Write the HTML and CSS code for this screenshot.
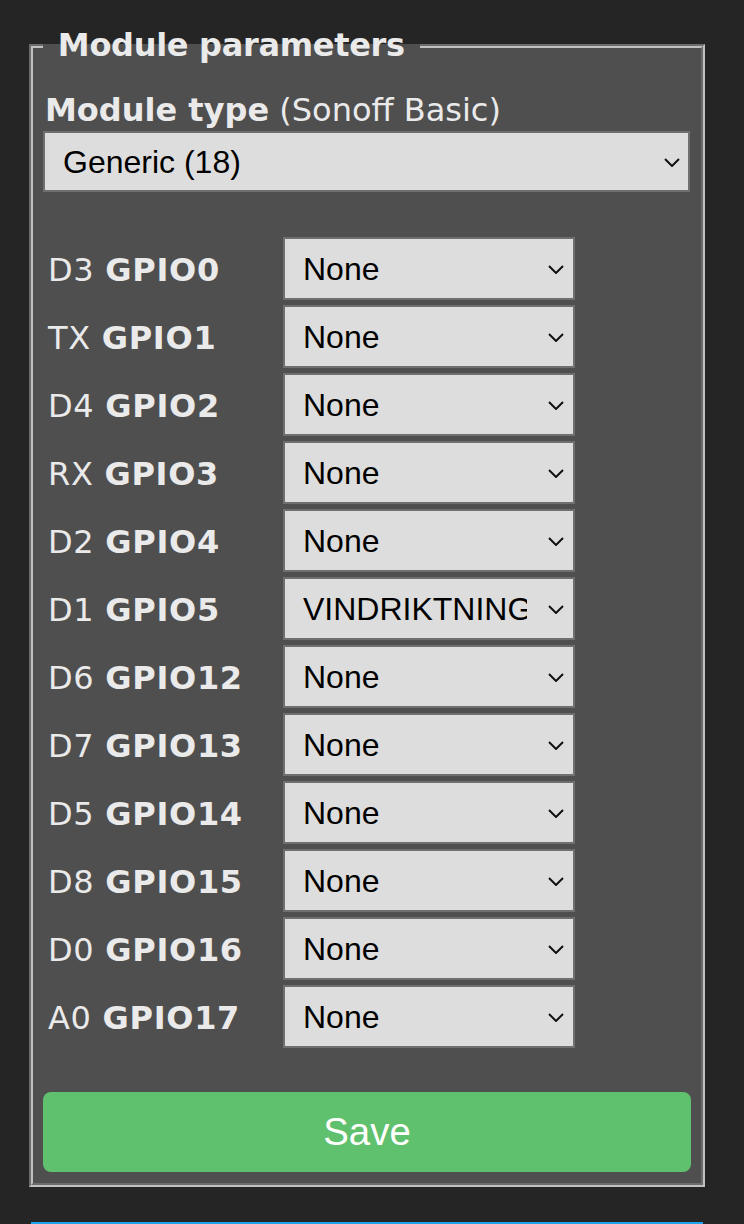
FILE: index.html
```
<!DOCTYPE HTML>
<html lang="en">

<head>
  <meta charset="utf-8" />
  <meta name="viewport" content="width=device-width,initial-scale=1.0,user-scalable=no" />
  <title>Configure Module</title>
  <link rel="stylesheet" href="styles.css">
</head>

<body>
  <div id="main">
    <fieldset id="module">
      <legend><b>&nbsp;Module parameters&nbsp;</b></legend>
      <form>
        <div class="type"><b>Module type</b> (Sonoff Basic)</div>
        <span class="pick sel-wide">
          <select><option>Generic (18)</option></select>
          <svg class="chev" viewBox="0 0 16 9"><path d="M1 1 L8 8 L15 1" /></svg>
        </span>

        <div id="gpios">
          <label>D3 <b>GPIO0</b></label>
          <span class="pick">
            <select><option>None</option></select>
            <svg class="chev" viewBox="0 0 16 9"><path d="M1 1 L8 8 L15 1" /></svg>
          </span>
          <label>TX <b>GPIO1</b></label>
          <span class="pick">
            <select><option>None</option></select>
            <svg class="chev" viewBox="0 0 16 9"><path d="M1 1 L8 8 L15 1" /></svg>
          </span>
          <label>D4 <b>GPIO2</b></label>
          <span class="pick">
            <select><option>None</option></select>
            <svg class="chev" viewBox="0 0 16 9"><path d="M1 1 L8 8 L15 1" /></svg>
          </span>
          <label>RX <b>GPIO3</b></label>
          <span class="pick">
            <select><option>None</option></select>
            <svg class="chev" viewBox="0 0 16 9"><path d="M1 1 L8 8 L15 1" /></svg>
          </span>
          <label>D2 <b>GPIO4</b></label>
          <span class="pick">
            <select><option>None</option></select>
            <svg class="chev" viewBox="0 0 16 9"><path d="M1 1 L8 8 L15 1" /></svg>
          </span>
          <label>D1 <b>GPIO5</b></label>
          <span class="pick">
            <select><option>VINDRIKTNING</option></select>
            <svg class="chev" viewBox="0 0 16 9"><path d="M1 1 L8 8 L15 1" /></svg>
          </span>
          <label>D6 <b>GPIO12</b></label>
          <span class="pick">
            <select><option>None</option></select>
            <svg class="chev" viewBox="0 0 16 9"><path d="M1 1 L8 8 L15 1" /></svg>
          </span>
          <label>D7 <b>GPIO13</b></label>
          <span class="pick">
            <select><option>None</option></select>
            <svg class="chev" viewBox="0 0 16 9"><path d="M1 1 L8 8 L15 1" /></svg>
          </span>
          <label>D5 <b>GPIO14</b></label>
          <span class="pick">
            <select><option>None</option></select>
            <svg class="chev" viewBox="0 0 16 9"><path d="M1 1 L8 8 L15 1" /></svg>
          </span>
          <label>D8 <b>GPIO15</b></label>
          <span class="pick">
            <select><option>None</option></select>
            <svg class="chev" viewBox="0 0 16 9"><path d="M1 1 L8 8 L15 1" /></svg>
          </span>
          <label>D0 <b>GPIO16</b></label>
          <span class="pick">
            <select><option>None</option></select>
            <svg class="chev" viewBox="0 0 16 9"><path d="M1 1 L8 8 L15 1" /></svg>
          </span>
          <label>A0 <b>GPIO17</b></label>
          <span class="pick">
            <select><option>None</option></select>
            <svg class="chev" viewBox="0 0 16 9"><path d="M1 1 L8 8 L15 1" /></svg>
          </span>
        </div>

        <button type="button" class="button bgrn">Save</button>
      </form>
    </fieldset>

    <div class="next-btn"></div>
  </div>
</body>

</html>
```

FILE: styles.css
```
html,
body {
  height: 1224px;
  overflow: hidden;
}

body {
  margin: 0px;
  background: #252525;
  color: #eaeaea;
  font-family: "DejaVu Sans", Verdana, sans-serif;
  font-size: 32px;
}

#main {
  width: 676px;
  margin-left: 29px;
}

#module {
  margin: 27px 0 0 0;
  padding: 0 10px 11px 10px;
  min-width: 0;
  box-sizing: border-box;
  width: 676px;
  border: 4px groove #c0c0c0;
  background: #4f4f4f;
}

#module legend {
  padding: 0 4px;
  font-size: 32px;
  line-height: 37px;
  letter-spacing: -0.3px;
}

.type {
  margin-top: 28px;
  padding-left: 2px;
  line-height: 37px;
}

.pick {
  position: relative;
  display: block;
  width: 292px;
}

.pick select {
  display: block;
  width: 100%;
  box-sizing: border-box;
  height: 63px;
  margin: 0;
  padding: 0 46px 0 18px;
  border: 2px solid #6f6f6f;
  border-radius: 0;
  background: #dddddd;
  color: #000;
  font-family: "Liberation Sans", Arial, sans-serif;
  font-size: 32px;
  -webkit-appearance: none;
  appearance: none;
}

.chev {
  position: absolute;
  right: 11px;
  top: 50%;
  width: 16px;
  height: 9px;
  margin-top: -4px;
  pointer-events: none;
}

.chev path {
  fill: none;
  stroke: #111;
  stroke-width: 2;
}

.sel-wide {
  width: 647px;
  margin-top: 2px;
}

.sel-wide select {
  height: 61px;
  padding-left: 18px;
}

.sel-wide .chev {
  right: 10px;
}

#gpios {
  display: grid;
  grid-template-columns: 240px 292px;
  row-gap: 5px;
  margin-top: 45px;
  align-items: center;
}

#gpios label {
  padding-left: 5px;
  padding-top: 2px;
  letter-spacing: 0.7px;
}

.button {
  display: block;
  border: 0;
  border-radius: 8px;
  color: #fff;
  font-family: "Liberation Sans", Arial, sans-serif;
  font-size: 38.4px;
  line-height: 80px;
  height: 80px;
  padding: 0;
  cursor: pointer;
}

.bgrn {
  width: 648px;
  margin-top: 44px;
  background: #5fc06d;
}

.next-btn {
  width: 672px;
  height: 2px;
  margin: 35px 0 0 2px;
  background: #1fa3ec;
}
```
